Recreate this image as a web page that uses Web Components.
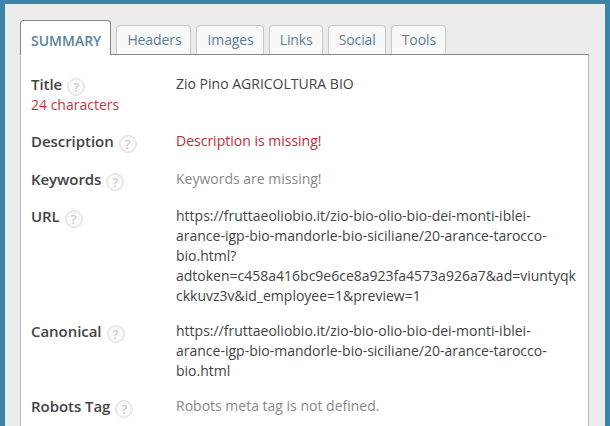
<!DOCTYPE html>
<html>
<head>
<meta charset="utf-8">
<style>
html, body { margin: 0; height: 426px; overflow: hidden; }
body { font-family: "Open Sans", sans-serif; font-size: 14px; line-height: 20px; color: #444; }
</style>
</head>
<body>
<seo-frame>
	<seo-tabs>
		<seo-tab active>SUMMARY</seo-tab>
		<seo-tab>Headers</seo-tab>
		<seo-tab>Images</seo-tab>
		<seo-tab>Links</seo-tab>
		<seo-tab>Social</seo-tab>
		<seo-tab>Tools</seo-tab>
	</seo-tabs>
	<seo-panel>
		<seo-row label="Title">
			<span slot="note">24 characters</span>
			Zio Pino AGRICOLTURA BIO
		</seo-row>
		<seo-row label="Description" tone="error">Description is missing!</seo-row>
		<seo-row label="Keywords" tone="muted">Keywords are missing!</seo-row>
		<seo-row label="URL">https://fruttaeoliobio.it/zio-bio-olio-bio-dei-monti-iblei-arance-igp-bio-mandorle-bio-siciliane/20-arance-tarocco-bio.html?adtoken=c458a416bc9e6ce8a923fa4573a926a7&amp;ad=viuntyqkckkuvz3v&amp;id_employee=1&amp;preview=1</seo-row>
		<seo-row label="Canonical">https://fruttaeoliobio.it/zio-bio-olio-bio-dei-monti-iblei-arance-igp-bio-mandorle-bio-siciliane/20-arance-tarocco-bio.html</seo-row>
		<seo-row label="Robots Tag" tone="muted">Robots meta tag is not defined.</seo-row>
	</seo-panel>
</seo-frame>
<script>
class SeoFrame extends HTMLElement {
	constructor() {
		super();
		this.attachShadow({ mode: "open" }).innerHTML = `<style>
			:host {
				display: block;
				box-sizing: border-box;
				height: 426px;
				background: #ececec;
				border: solid #3a85aa;
				border-width: 4px 5px 0 5px;
				padding: 16px 16px 0 15px;
			}
		</style><slot></slot>`;
	}
}
customElements.define("seo-frame", SeoFrame);

class SeoTabs extends HTMLElement {
	constructor() {
		super();
		this.attachShadow({ mode: "open" }).innerHTML = `<style>
			:host {
				display: flex;
				align-items: flex-end;
				gap: 5px;
				height: 34px;
			}
		</style><slot></slot>`;
	}
}
customElements.define("seo-tabs", SeoTabs);

class SeoTab extends HTMLElement {
	constructor() {
		super();
		this.attachShadow({ mode: "open" }).innerHTML = `<style>
			:host {
				display: block;
				box-sizing: border-box;
				height: 29px;
				padding: 4px 9px 0 10px;
				background: #f8f8f8;
				border: 1px solid #c8c8c8;
				border-bottom: 0;
				border-radius: 4px 4px 0 0;
				color: #5f7f94;
				letter-spacing: -0.1px;
				position: relative;
			}
			:host([active]) {
				height: 35px;
				margin-bottom: -1px;
				padding: 10px 9px 0 10px;
				background: #fff;
				border-color: #888;
				font-weight: 600;
				color: #5b8299;
				letter-spacing: 0;
				z-index: 1;
			}
		</style><slot></slot>`;
	}
}
customElements.define("seo-tab", SeoTab);

class SeoPanel extends HTMLElement {
	constructor() {
		super();
		this.attachShadow({ mode: "open" }).innerHTML = `<style>
			:host {
				display: flex;
				flex-direction: column;
				gap: 15px;
				box-sizing: border-box;
				height: 372px;
				padding: 18.5px 10px 0;
				background: #fff;
				border: 1px solid #bbb;
				border-top-color: #888;
				border-bottom: 0;
			}
		</style><slot></slot>`;
	}
}
customElements.define("seo-panel", SeoPanel);

class SeoRow extends HTMLElement {
	constructor() {
		super();
		this.attachShadow({ mode: "open" }).innerHTML = `<style>
			:host {
				display: grid;
				grid-template-columns: 145px 402px;
			}
			.label {
				font-size: 15px;
				font-weight: 600;
				color: #444;
				letter-spacing: -0.05px;
				display: flex;
				align-items: center;
				gap: 5px;
				height: 22.5px;
				margin-top: -1px;
			}
			.help {
				box-sizing: border-box;
				width: 18px;
				height: 18px;
				margin-top: 6px;
				border: 1px solid #e0e0e0;
				border-radius: 50%;
				background: #fafafa;
				box-shadow: inset 0 0 2px #ddd;
				color: #d0d0d0;
				font-size: 13px;
				font-weight: 600;
				line-height: 16px;
				text-align: center;
			}
			.note { color: #c4343f; display: block; margin-bottom: 1px; }
			.value { overflow-wrap: anywhere; }
			:host([tone="error"]) .value { color: #c4283a; }
			:host([tone="muted"]) .value { color: #888; }
		</style>
		<div>
			<div class="label"><span class="name"></span><span class="help">?</span></div>
			<div class="note"><slot name="note"></slot></div>
		</div>
		<div class="value"><slot></slot></div>`;
		this.shadowRoot.querySelector(".name").textContent = this.getAttribute("label");
	}
}
customElements.define("seo-row", SeoRow);
</script>
</body>
</html>
